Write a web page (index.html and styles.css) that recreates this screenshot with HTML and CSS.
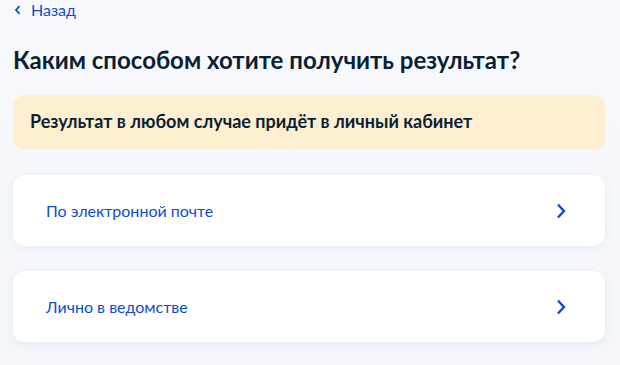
FILE: index.html
```html
<!DOCTYPE html>
<html>
<head>
    <title>Способ получения</title>
    <link rel="stylesheet" href="styles.css">
</head>
<body>
    <div class="page">
        <a class="back-link" href="#">
            <svg class="back-icon" width="8" height="10" viewBox="0 0 8 10"><path d="M5.5 1.2L2 5l3.5 3.8" fill="none" stroke="#0d4cd3" stroke-width="1.8"/></svg>
            Назад
        </a>

        <h1 class="title">Каким способом хотите получить результат?</h1>

        <div class="notice">Результат в любом случае придёт в личный кабинет</div>

        <a class="option" href="#">
            <span>По электронной почте</span>
            <svg class="chevron" width="12" height="16" viewBox="0 0 12 16"><path d="M3 1.5l6 6.5-6 6.5" fill="none" stroke="#0d4cd3" stroke-width="2.4"/></svg>
        </a>

        <a class="option" href="#">
            <span>Лично в ведомстве</span>
            <svg class="chevron" width="12" height="16" viewBox="0 0 12 16"><path d="M3 1.5l6 6.5-6 6.5" fill="none" stroke="#0d4cd3" stroke-width="2.4"/></svg>
        </a>
    </div>
</body>
</html>
```

FILE: styles.css
```css
body {
    margin: 0;
    background: linear-gradient(180deg, #f8f9fd 0%, #f4f6fb 100%);
    min-height: 365px;
    font-family: Lato, "Noto Sans", sans-serif;
    color: #0b1f33;
}

.page {
    padding: 0 15px 0 13px;
}

.back-link {
    display: flex;
    align-items: center;
    gap: 9px;
    font-size: 16px;
    line-height: 20px;
    color: #0d4cd3;
    text-decoration: none;
}

.back-icon {
    margin-left: 1px;
}

.title {
    margin: 24px 0 0 0;
    font-size: 24px;
    line-height: 32px;
    font-weight: 700;
}

.notice {
    margin-top: 19px;
    padding: 16px 17px 18px;
    height: 21px;
    background: #feefd1;
    border-radius: 12px;
    font-size: 18px;
    line-height: 21px;
    font-weight: 700;
}

.option {
    display: flex;
    align-items: center;
    justify-content: space-between;
    height: 71px;
    margin-top: 25px;
    padding: 0 38px 0 33px;
    background: #fff;
    border-radius: 12px;
    box-shadow: 0 2px 8px rgba(80, 110, 180, 0.1);
    font-size: 16px;
    color: #0d4cd3;
    text-decoration: none;
}
```
